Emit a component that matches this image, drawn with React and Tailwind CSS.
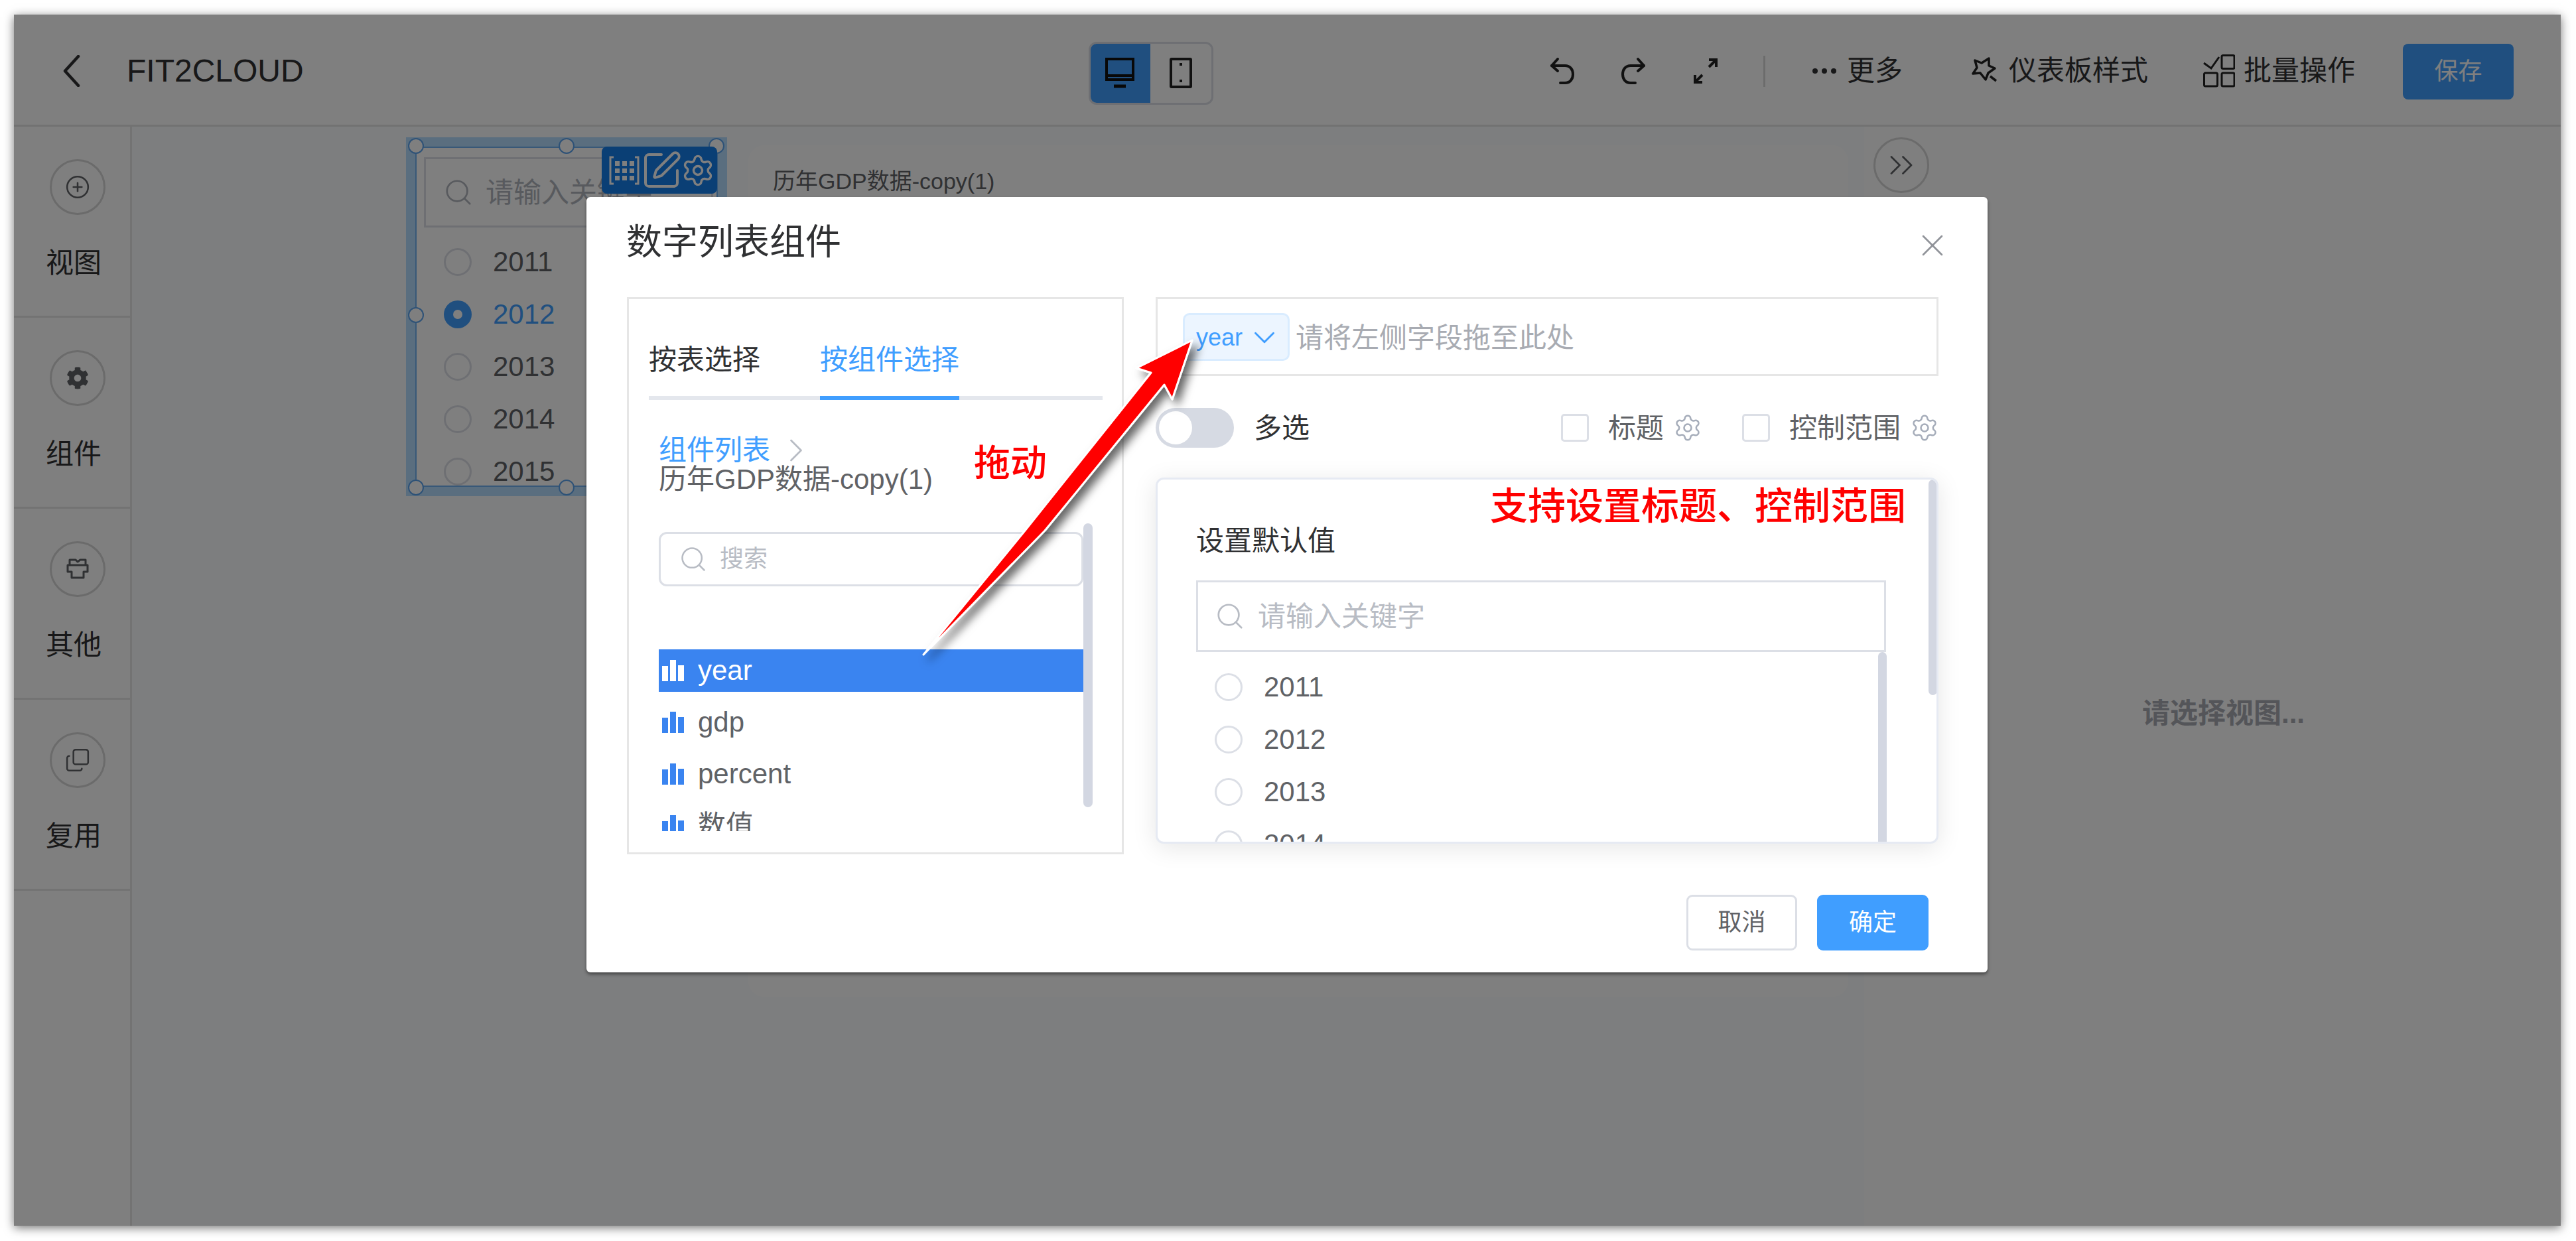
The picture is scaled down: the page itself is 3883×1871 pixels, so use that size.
import React from 'react';
import { CirclePlus, Copy, ChevronsRight, Settings, SquarePen, Search, ChevronDown, ChevronRight, X } from 'lucide-react';
import { FaCog } from 'react-icons/fa';

function Bars({ color }) {
  return (
    <svg width="33" height="32" viewBox="0 0 33 32" className="shrink-0">
      <rect x="0" y="9" width="9" height="23" fill={color} />
      <rect x="12" y="0" width="9" height="32" fill={color} />
      <rect x="24" y="8" width="9" height="24" fill={color} />
    </svg>
  );
}

function SideItem({ icon, label }) {
  return (
    <div className="h-[288px] border-b-[3px] border-[#e6e6e6] pt-[49px] shrink-0">
      <div className="ml-[54px] w-[84px] h-[84px] rounded-full border-[3px] border-[#d6d6d6] flex items-center justify-center text-[#606266]">
        {icon}
      </div>
      <div className="ml-[48px] mt-[51px] h-[44px] leading-[44px] text-[42px] text-[#303133]">{label}</div>
    </div>
  );
}

function Radio({ text, selected }) {
  return (
    <div className="h-[79px] flex items-center">
      {selected ? (
        <div className="w-[42px] h-[42px] rounded-full bg-[#409eff] flex items-center justify-center shrink-0">
          <div className="w-[14px] h-[14px] rounded-full bg-white" />
        </div>
      ) : (
        <div className="w-[42px] h-[42px] rounded-full border-[3px] border-[#dcdfe6] bg-white shrink-0" />
      )}
      <span className={`ml-[32px] text-[42px] leading-[44px] ${selected ? 'text-[#409eff]' : 'text-[#606266]'}`}>{text}</span>
    </div>
  );
}

function FieldRow({ label, active }) {
  return (
    <div className={`h-[64px] flex items-center pl-[5px] ${active ? 'bg-[#3a84f0] text-white' : 'text-[#606266]'}`}>
      <Bars color={active ? '#ffffff' : '#3a84f0'} />
      <span className="ml-[21px] text-[42px] leading-[64px]">{label}</span>
    </div>
  );
}

export default function App() {
  return (
    <div className="relative w-[3883px] h-[1871px] bg-white overflow-hidden pl-[21px] pt-[22px] [font-family:'Liberation_Sans','Noto_Sans_CJK_SC',sans-serif]">
      {/* window */}
      <div className="relative w-[3839px] h-[1826px] bg-white flex flex-col shadow-[0_3px_14px_rgba(0,0,0,0.55)]">
        {/* header */}
        <div className="h-[169px] shrink-0 border-b-[3px] border-[#e4e4e4] pt-[4px] flex items-center">
          <div className="w-[1620px] shrink-0 flex items-center pl-[73px]">
            <svg width="28" height="48" viewBox="0 0 28 48" fill="none" stroke="#303133" strokeWidth="4.5" strokeLinecap="round" strokeLinejoin="round">
              <path d="M24 2 L4 24 L24 46" />
            </svg>
            <span className="ml-[69px] text-[48px] leading-[56px] text-[#303133]">FIT2CLOUD</span>
          </div>
          <div className="w-[188px] h-[95px] mt-[6px] shrink-0 flex rounded-[12px] border-[3px] border-[#dcdfe6] overflow-hidden">
            <div className="w-[93px] -ml-[3px] -my-[3px] bg-[#409eff] flex items-center justify-center">
              <svg width="44" height="48" viewBox="0 0 44 48" fill="none" stroke="#111" strokeWidth="4">
                <rect x="2" y="3" width="40" height="31" />
                <path d="M2 28 H42" />
                <path d="M13 44 H31" strokeWidth="5" />
              </svg>
            </div>
            <div className="flex-1 flex items-center justify-center">
              <svg width="34" height="46" viewBox="0 0 34 46" fill="none" stroke="#222" strokeWidth="4">
                <rect x="2" y="2" width="30" height="42" rx="1" />
                <path d="M15 10 h4 M15 35 h4" strokeWidth="4" />
              </svg>
            </div>
          </div>
          <svg className="ml-[506px] shrink-0" width="40" height="42" viewBox="0 0 40 42" fill="none" stroke="#222" strokeWidth="4" strokeLinecap="round" strokeLinejoin="round">
            <path d="M13 3 L4 13 L13 21" />
            <path d="M4 13 H24 C32 13 36 19 36 26 C36 33 32 39 24 39 H17" />
          </svg>
          <svg className="ml-[67px] shrink-0" width="40" height="42" viewBox="0 0 40 42" fill="none" stroke="#222" strokeWidth="4" strokeLinecap="round" strokeLinejoin="round">
            <path d="M27 3 L36 13 L27 21" />
            <path d="M36 13 H16 C8 13 4 19 4 26 C4 33 8 39 16 39 H23" />
          </svg>
          <svg className="ml-[69px] shrink-0" width="40" height="42" viewBox="0 0 40 42" fill="none" stroke="#222" strokeWidth="4">
            <path d="M25 4 H36 V15 M36 4 L25 15" />
            <path d="M15 38 H4 V27 M4 38 L15 27" />
          </svg>
          <div className="ml-[67px] w-[3px] h-[47px] bg-[#d8d8d8] shrink-0" />
          <div className="ml-[71px] w-[36px] flex justify-between shrink-0">
            <span className="w-[8px] h-[8px] rounded-full bg-[#303133]" />
            <span className="w-[8px] h-[8px] rounded-full bg-[#303133]" />
            <span className="w-[8px] h-[8px] rounded-full bg-[#303133]" />
          </div>
          <span className="ml-[16px] text-[42px] leading-[50px] text-[#303133] shrink-0">更多</span>
          <svg className="ml-[103px] shrink-0" width="40" height="44" viewBox="0 0 40 44" fill="none" stroke="#222" strokeWidth="3.5" strokeLinejoin="round">
            <path d="M6 6 L16 10 L27 3 L27 14 L36 18 L26 25 L22 35 L14 25 L3 26 L9 17 Z" />
            <path d="M29 30 L38 37" />
          </svg>
          <span className="ml-[17px] text-[42px] leading-[50px] text-[#303133] shrink-0">仪表板样式</span>
          <svg className="ml-[83px] shrink-0" width="48" height="50" viewBox="0 0 48 50" fill="none" stroke="#222" strokeWidth="3">
            <path d="M1 13 L12 21 L24 4" />
            <rect x="28" y="1.5" width="19" height="20" rx="2" />
            <rect x="1.5" y="28" width="20" height="20" rx="2" />
            <rect x="28" y="28" width="19" height="20" rx="2" />
          </svg>
          <span className="ml-[13px] text-[42px] leading-[50px] text-[#303133] shrink-0">批量操作</span>
          <div className="ml-[72px] mt-[2px] w-[167px] h-[84px] rounded-[8px] bg-[#409eff] flex items-center justify-center text-white text-[36px] shrink-0">保存</div>
        </div>

        {/* body */}
        <div className="flex-1 flex min-h-0">
          <div className="w-[178px] shrink-0 border-r-[3px] border-[#e6e6e6] flex flex-col">
            <SideItem label="视图" icon={<CirclePlus size={38} strokeWidth={1.6} />} />
            <SideItem label="组件" icon={<FaCog size={34} />} />
            <SideItem
              label="其他"
              icon={
                <svg width="36" height="36" viewBox="0 0 36 36" fill="none" stroke="currentColor" strokeWidth="3" strokeLinejoin="round">
                  <path d="M6 12 V4 H15 L18 7 L22 4 H30 V12" />
                  <path d="M3 12 H33 V22 H27 V31 H9 V22 H3 Z" />
                </svg>
              }
            />
            <SideItem label="复用" icon={<Copy size={38} strokeWidth={1.6} className="-scale-y-100" />} />
          </div>

          {/* canvas */}
          <div className="relative w-[2611px] shrink-0 bg-[#fbfcff]">
            <div className="absolute left-[929px] top-[28px] w-[1658px] h-[1284px] bg-white rounded-[24px] pl-[37px] pt-[34px] text-[34px] leading-[40px] text-[#606266]">
              历年GDP数据-copy(1)
            </div>
            {/* selected widget */}
            <div className="absolute left-[413px] top-[16px] w-[484px] h-[541px] p-[14px] bg-[#b4dcff]">
              <div className="w-full h-full bg-white border-2 border-[#70b0f0] pl-[11px] pt-[14px] overflow-hidden">
                <div className="w-[436px] h-[106px] border-[3px] border-[#dcdfe6] flex items-center pl-[26px]">
                  <Search size={46} strokeWidth={1.4} className="text-[#b0b4bc] shrink-0" />
                  <span className="ml-[18px] text-[42px] text-[#b0b4bc] whitespace-nowrap">请输入关键字</span>
                </div>
                <div className="mt-[12px] pl-[30px]">
                  <Radio text="2011" />
                  <Radio text="2012" selected />
                  <Radio text="2013" />
                  <Radio text="2014" />
                  <Radio text="2015" />
                </div>
              </div>
              <div className="absolute left-[3px] top-[1px] w-[24px] h-[24px] rounded-full bg-white border-2 border-[#5da4ee]" />
              <div className="absolute left-[230px] top-[1px] w-[24px] h-[24px] rounded-full bg-white border-2 border-[#5da4ee]" />
              <div className="absolute left-[456px] top-[1px] w-[24px] h-[24px] rounded-full bg-white border-2 border-[#5da4ee]" />
              <div className="absolute left-[3px] top-[256px] w-[24px] h-[24px] rounded-full bg-white border-2 border-[#5da4ee]" />
              <div className="absolute left-[3px] top-[516px] w-[24px] h-[24px] rounded-full bg-white border-2 border-[#5da4ee]" />
              <div className="absolute left-[230px] top-[516px] w-[24px] h-[24px] rounded-full bg-white border-2 border-[#5da4ee]" />
              <div className="absolute left-[295px] top-[14px] w-[174px] h-[71px] rounded-[8px] bg-[#147eea] flex items-center pl-[11px] text-white">
                <svg className="shrink-0" width="46" height="44" viewBox="0 0 46 44" fill="none" stroke="currentColor" strokeWidth="3">
                  <path d="M7 2 H2 V42 H7 M39 2 H44 V42 H39" />
                  <g fill="currentColor" stroke="none">
                    <rect x="9" y="8" width="7" height="7" /><rect x="20" y="8" width="7" height="7" /><rect x="31" y="8" width="7" height="7" />
                    <rect x="9" y="19" width="7" height="7" /><rect x="20" y="19" width="7" height="7" /><rect x="31" y="19" width="7" height="7" />
                    <rect x="9" y="30" width="7" height="7" /><rect x="20" y="30" width="7" height="7" /><rect x="31" y="30" width="7" height="7" />
                  </g>
                </svg>
                <SquarePen size={64} strokeWidth={1.5} className="ml-[1px] shrink-0" />
                <Settings size={52} strokeWidth={1.6} className="-ml-[3px] shrink-0" />
              </div>
            </div>
          </div>

          {/* right panel */}
          <div className="flex-1 border-l-[3px] border-[#ededed] -ml-[3px] pl-[14px] pt-[16px] bg-white">
            <div className="w-[84px] h-[84px] rounded-full border-[3px] border-[#d6d6d6] flex items-center justify-center text-[#606266]">
              <ChevronsRight size={60} strokeWidth={1.1} className="shrink-0" />
            </div>
            <div className="ml-[405px] mt-[763px] text-[42px] leading-[44px] font-bold text-[#a8abb2] whitespace-nowrap">请选择视图...</div>
          </div>
        </div>

        {/* dim layer */}
        <div className="absolute inset-0 bg-black/50" />

        {/* modal */}
        <div className="absolute left-[863px] top-[275px] w-[2112px] h-[1169px] bg-white rounded-[6px] shadow-[0_3px_5px_rgba(0,0,0,0.45)] flex flex-col">
          <div className="h-[151px] shrink-0 pt-[38px] pl-[60px] pr-[55px] flex justify-between items-start">
            <span className="text-[54px] leading-[60px] text-[#303133]">数字列表组件</span>
            <X size={56} strokeWidth={1.1} className="mt-[7px] text-[#909399] shrink-0" />
          </div>
          <div className="h-[840px] shrink-0 pl-[61px] flex">
            {/* left panel */}
            <div className="relative w-[749px] h-[840px] shrink-0 border-[3px] border-[#e6e6e6]">
              <div className="mx-[30px] h-[152px] w-[684px] border-b-[6px] border-[#e4e7ed] flex items-stretch">
                <div className="pt-[36px] flex items-center text-[42px] text-[#303133]">按表选择</div>
                <div className="ml-[90px] pt-[36px] -mb-[6px] border-b-[6px] border-[#409eff] flex items-center text-[42px] text-[#409eff]">按组件选择</div>
              </div>
              <div className="ml-[45px] mt-[54px] h-[44px] flex items-center">
                <span className="text-[42px] leading-[44px] text-[#409eff]">组件列表</span>
                <ChevronRight size={60} strokeWidth={1.1} className="ml-[9px] text-[#b8bcc4] shrink-0" />
              </div>
              <div className="ml-[45px] h-[44px] text-[42px] leading-[44px] text-[#606266] whitespace-nowrap">历年GDP数据-copy(1)</div>
              <div className="ml-[45px] mt-[57px] w-[640px] h-[82px] rounded-[12px] border-[3px] border-[#dcdfe6] flex items-center pl-[27px]">
                <Search size={44} strokeWidth={1.4} className="text-[#b8bcc4] shrink-0" />
                <span className="ml-[18px] text-[36px] text-[#b8bcc4]">搜索</span>
              </div>
              <div className="ml-[45px] mt-[95px] w-[640px] h-[274px] overflow-hidden flex flex-col gap-[14px]">
                <FieldRow label="year" active />
                <FieldRow label="gdp" />
                <FieldRow label="percent" />
                <FieldRow label="数值" />
              </div>
              <div className="absolute left-[685px] top-[338px] w-[14px] h-[428px] rounded-full bg-[#d3d7e2]" />
            </div>

            {/* right column */}
            <div className="ml-[48px] w-[1180px] shrink-0 flex flex-col">
              <div className="h-[119px] shrink-0 border-[3px] border-[#e6e6e6] flex items-center pl-[38px]">
                <div className="w-[161px] h-[72px] rounded-[10px] bg-[#ecf5ff] border-[3px] border-[#d9ecff] flex items-center pl-[17px] pt-[2px] text-[#409eff]">
                  <span className="text-[36px] leading-[40px]">year</span>
                  <ChevronDown size={54} strokeWidth={1.3} className="ml-[6px] shrink-0" />
                </div>
                <span className="ml-[9px] pt-[3px] text-[42px] text-[#a8abb2]">请将左侧字段拖至此处</span>
              </div>
              <div className="mt-[48px] h-[60px] shrink-0 flex items-center">
                <div className="w-[118px] h-[60px] rounded-full bg-[#d6dae3] p-[5px] shrink-0">
                  <div className="w-[50px] h-[50px] rounded-full bg-white" />
                </div>
                <span className="ml-[30px] text-[42px] text-[#303133]">多选</span>
                <div className="ml-auto w-[42px] h-[42px] rounded-[5px] border-[3px] border-[#dcdfe6]" />
                <span className="ml-[29px] text-[42px] text-[#606266]">标题</span>
                <Settings size={44} strokeWidth={1.4} className="ml-[14px] text-[#a6adba] shrink-0" />
                <div className="ml-[60px] w-[42px] h-[42px] rounded-[5px] border-[3px] border-[#dcdfe6]" />
                <span className="ml-[29px] text-[42px] text-[#606266]">控制范围</span>
                <Settings size={44} strokeWidth={1.4} className="ml-[14px] -mr-[1px] text-[#a6adba] shrink-0" />
              </div>
              <div className="relative mt-[45px] h-[552px] shrink-0 rounded-[12px] border-[3px] border-[#e6eaf3] bg-white shadow-[0_6px_36px_rgba(0,0,0,0.1)] overflow-hidden pl-[58px] pt-[71px]">
                <div className="h-[44px] text-[42px] leading-[44px] text-[#303133]">设置默认值</div>
                <div className="mt-[37px] w-[1040px] h-[108px] border-[3px] border-[#dcdfe6] flex items-center pl-[25px]">
                  <Search size={46} strokeWidth={1.4} className="text-[#b8bcc4] shrink-0" />
                  <span className="ml-[19px] text-[42px] text-[#b8bcc4]">请输入关键字</span>
                </div>
                <div className="mt-[13px] pl-[28px]">
                  <Radio text="2011" />
                  <Radio text="2012" />
                  <Radio text="2013" />
                  <Radio text="2014" />
                </div>
                <div className="absolute left-[1086px] top-[260px] w-[13px] h-[400px] rounded-full bg-[#d3d7e2]" />
                <div className="absolute left-[1162px] top-0 w-[13px] h-[325px] rounded-full bg-[#d3d7e2]" />
              </div>
            </div>
          </div>
          <div className="mt-[61px] pr-[89px] flex justify-end">
            <div className="w-[167px] h-[84px] rounded-[9px] border-[3px] border-[#dcdfe6] flex items-center justify-center text-[36px] text-[#606266]">取消</div>
            <div className="ml-[30px] w-[168px] h-[84px] rounded-[9px] bg-[#409eff] flex items-center justify-center text-[36px] text-white">确定</div>
          </div>
        </div>
      </div>

      {/* annotations */}
      <span className="absolute left-[1468px] top-[664px] text-[55px] leading-[68px] font-medium text-[#ff0000] whitespace-nowrap">拖动</span>
      <span className="absolute left-[2246px] top-[728px] text-[57px] leading-[70px] font-medium text-[#ff0000] whitespace-nowrap">支持设置标题、控制范围</span>
      <svg className="absolute left-0 top-0 pointer-events-none" width="3883" height="1871" viewBox="0 0 3883 1871">
        <defs>
          <filter id="arrowShadow" x="-20%" y="-20%" width="140%" height="140%">
            <feDropShadow dx="8" dy="8" stdDeviation="7" floodColor="#000" floodOpacity="0.6" />
          </filter>
        </defs>
        <polygon
          points="1392,987 1545,800 1735,562 1713,555 1797,513 1767,602 1755,580 1575,800"
          fill="#ff0000"
          stroke="#ffffff"
          strokeWidth="3"
          strokeLinejoin="round"
          filter="url(#arrowShadow)"
        />
      </svg>
    </div>
  );
}
